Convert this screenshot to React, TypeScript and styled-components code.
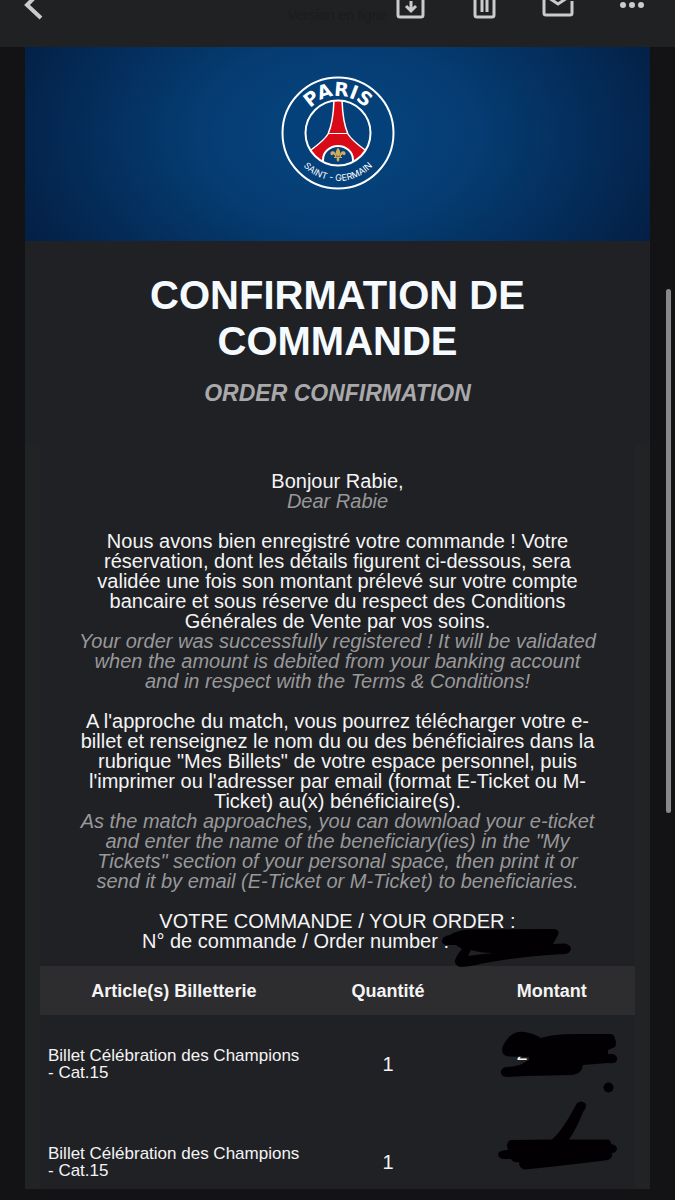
import { ReactNode } from "react";
import styled, { createGlobalStyle } from "styled-components";

const GlobalStyle = createGlobalStyle`
  * {
    box-sizing: border-box;
  }
  body {
    margin: 0;
    background: #131315;
    color: #f4f4f5;
    font-family: "Liberation Sans", Arial, sans-serif;
  }
`;

const Screen = styled.div`
  display: flex;
  flex-direction: column;
  height: 100vh;
  padding-bottom: 11px;
  overflow: hidden;
`;

const Toolbar = styled.header`
  position: relative;
  display: flex;
  justify-content: space-between;
  align-items: flex-start;
  flex-shrink: 0;
  height: 47px;
  padding: 0 27px 0 20px;
  background: #1f2122;
`;

const Actions = styled.div`
  display: flex;
  gap: 42px;
`;

const IconButton = styled.button`
  display: flex;
  padding: 0;
  border: 0;
  background: none;
  color: #cbcbcd;
  cursor: pointer;
`;

const OnlineLink = styled.a`
  position: absolute;
  top: 8px;
  left: 0;
  right: 0;
  width: max-content;
  margin: 0 auto;
  font-size: 14px;
  line-height: 15px;
  color: #1b1c1e;
  text-decoration: none;
`;

const Viewport = styled.main`
  position: relative;
  flex: 1;
  min-height: 0;
  padding: 0 25px;
  overflow: hidden;
`;

const ScrollThumb = styled.div`
  position: absolute;
  top: 242px;
  right: 4px;
  width: 5px;
  height: 524px;
  border-radius: 3px;
  background: #89898b;
`;

const Mail = styled.article`
  background: #222325;
  text-align: center;
`;

const Banner = styled.div`
  display: flex;
  justify-content: center;
  padding: 28px 0 50px;
  background: radial-gradient(
    ellipse 56% 120% at 50% 45%,
    #064680 0%,
    #053c72 40%,
    #042b57 75%,
    #041f45 100%
  );
`;

const Heading = styled.div`
  padding: 31px 100px 39px;
  background: #202124;
`;

const Title = styled.h1`
  margin: 0;
  font-size: 40px;
  line-height: 46px;
  color: #f5faff;
`;

const Subtitle = styled.p`
  margin: 16px 0 0;
  font-size: 23px;
  font-weight: bold;
  font-style: italic;
  line-height: 26px;
  color: #a9a9ab;
`;

const Content = styled.div`
  margin: 0 15px;
  padding-top: 26px;
  background: #202124;
`;

const Paragraph = styled.p`
  margin: 0 38px 20px;
  font-size: 20px;
  line-height: 20px;
`;

const English = styled.em`
  display: block;
  color: #98989a;
`;

const OrderInfo = styled(Paragraph)`
  margin-bottom: 15px;
`;

const OrderNumber = styled.span`
  position: relative;
  padding-right: 84px;
`;

const Table = styled.table`
  width: 100%;
  border-collapse: collapse;
  table-layout: fixed;
`;

const HeadCell = styled.th<{ $width: string }>`
  width: ${({ $width }) => $width};
  height: 49px;
  padding: 0;
  background: #2d2d2f;
  font-size: 18px;
  line-height: 20px;
`;

const Cell = styled.td`
  height: 98px;
  padding: 0;
  font-size: 20px;
  line-height: 20px;
`;

const ItemCell = styled(Cell)`
  padding: 0 4px 0 8px;
  font-size: 17px;
  line-height: 17px;
  text-align: left;
`;

const Amount = styled.div`
  position: relative;
  height: 98px;
  padding: 28px 0 0 48px;
  text-align: left;
`;

const Scribble = styled.svg`
  position: absolute;
  overflow: visible;
  fill: #020003;
`;

const OrderScribble = styled(Scribble)`
  top: -2px;
  right: -37px;
`;

const AmountScribble = styled(Scribble)`
  top: 0;
  left: 22px;
`;

function Icon({ children }: { children: ReactNode }) {
  return (
    <svg
      width="32"
      height="22"
      viewBox="0 0 32 22"
      fill="none"
      stroke="currentColor"
      strokeWidth="3"
      aria-hidden="true"
    >
      {children}
    </svg>
  );
}

function Logo() {
  return (
    <svg width="116" height="116" viewBox="0 0 116 116" role="img" aria-label="Paris Saint-Germain">
      <defs>
        <path id="arcTop" d="M21 58a37 37 0 0 1 74 0" />
        <path id="arcBottom" d="M10 58a48 48 0 0 0 96 0" />
        <clipPath id="disc">
          <circle cx="58" cy="58" r="32" />
        </clipPath>
      </defs>
      <circle cx="58" cy="58" r="55.5" fill="#04407a" stroke="#fff" strokeWidth="2" />
      <g clipPath="url(#disc)">
        <path
          d="M54 20C54 38 52 50 48 59C44 66 36 71 27 78L36 96H80L89 78C80 71 72 66 68 59C64 50 62 38 62 20z"
          fill="#d90a18"
          stroke="#fff"
          strokeWidth="1.5"
        />
        <path d="M48 58.5h20" stroke="#fff" strokeWidth="1" />
        <path d="M43 94V85a15 14 0 0 1 30 0v9z" fill="#04407a" stroke="#fff" strokeWidth="2" />
      </g>
      <circle cx="58" cy="58" r="32.5" fill="none" stroke="#fff" strokeWidth="2" />
      <g fill="#d3a95a" stroke="none">
        <path d="M58 72.5c3 4 2.500 6 1 9h-2c-1.500-3-2-5 1-9z" />
        <path d="M56.500 82c0-5-3-6.500-5-5.500s-1 4.500 1 3.500c1.500-1 2.500 0 2.500 2zM59.500 82c0-5 3-6.500 5-5.500s1 4.500-1 3.500c-1.500-1-2.500 0-2.500 2z" />
        <path d="M54 82h8v1h-8zM57 83h2l.5 2-1.500 2-1.500-2z" />
      </g>
      <text
        fill="#fff"
        fontFamily="'DejaVu Sans', sans-serif"
        fontWeight="bold"
        fontSize="19"
        textAnchor="middle"
      >
        <textPath href="#arcTop" startOffset="50%">
          PARIS
        </textPath>
      </text>
      <text fill="#fff" fontFamily="Inter, sans-serif" fontSize="9" textAnchor="middle">
        <textPath href="#arcBottom" startOffset="50%">
          SAINT - GERMAIN
        </textPath>
      </text>
    </svg>
  );
}

const App = () => {
  return (
    <>
      <GlobalStyle />
      <Screen>
        <Toolbar>
          <IconButton aria-label="Retour">
            <Icon>
              <path d="M20-8L7 5l14 13" strokeWidth="4" />
            </Icon>
          </IconButton>
          <OnlineLink href="#">Version en ligne</OnlineLink>
          <Actions>
            <IconButton aria-label="Archiver">
              <Icon>
                <path d="M4-6v21a2 2 0 0 0 2 2h21a2 2 0 0 0 2-2V-6" />
                <path d="M17 1v10M12 6l5 5 5-5" />
              </Icon>
            </IconButton>
            <IconButton aria-label="Supprimer">
              <Icon>
                <path d="M7-4v19a2 2 0 0 0 2 2h15a2 2 0 0 0 2-2V-4M14 0v12M19 0v12" />
              </Icon>
            </IconButton>
            <IconButton aria-label="Marquer comme non lu">
              <Icon>
                <path d="M2-6v19a2 2 0 0 0 2 2h24a2 2 0 0 0 2-2V1M7-2l9 6 9-6" />
              </Icon>
            </IconButton>
            <IconButton aria-label="Plus">
              <Icon>
                <g fill="currentColor" stroke="none">
                  <circle cx="7" cy="5" r="3" />
                  <circle cx="16" cy="5" r="3" />
                  <circle cx="25" cy="5" r="3" />
                </g>
              </Icon>
            </IconButton>
          </Actions>
        </Toolbar>
        <Viewport>
          <Mail>
            <Banner>
              <Logo />
            </Banner>
            <Heading>
              <Title>CONFIRMATION DE COMMANDE</Title>
              <Subtitle>ORDER CONFIRMATION</Subtitle>
            </Heading>
            <Content>
              <Paragraph>
                Bonjour Rabie,
                <English>Dear Rabie</English>
              </Paragraph>
              <Paragraph>
                Nous avons bien enregistré votre commande ! Votre réservation, dont les détails
                figurent ci-dessous, sera validée une fois son montant prélevé sur votre compte
                bancaire et sous réserve du respect des Conditions Générales de Vente par vos
                soins.
                <English>
                  Your order was successfully registered ! It will be validated when the amount is
                  debited from your banking account and in respect with the Terms &amp;
                  Conditions!
                </English>
              </Paragraph>
              <Paragraph>
                A l'approche du match, vous pourrez télécharger votre e-billet et renseignez le
                nom du ou des bénéficiaires dans la rubrique "Mes Billets" de votre espace
                personnel, puis l'imprimer ou l'adresser par email (format E-Ticket ou M-Ticket)
                au(x) bénéficiaire(s).
                <English>
                  As the match approaches, you can download your e-ticket and enter the name of
                  the beneficiary(ies) in the "My Tickets" section of your personal space, then
                  print it or send it by email (E-Ticket or M-Ticket) to beneficiaries.
                </English>
              </Paragraph>
              <OrderInfo>
                VOTRE COMMANDE / YOUR ORDER :
                <br />
                <OrderNumber>
                  N° de commande / Order number :
                  <OrderScribble width="130" height="40" viewBox="440 928 130 40" aria-hidden="true">
                    <path
                      fillRule="evenodd"
                      d="M442 941Q442 936 450 935Q457 930 470 929.500L554 929Q560 930 558 935L553 944L565 943.500Q571 945 571 949Q570 954 564 954Q515 957 485 963Q468 967 460 967Q454 965 455 960Q457 954 462 949L456 945L446 945Q442 944 442 941zM471 950L468 956Q482 954 493 953Q480 953 471 950z"
                    />
                  </OrderScribble>
                </OrderNumber>
              </OrderInfo>
              <Table>
                <thead>
                  <tr>
                    <HeadCell $width="45%">Article(s) Billetterie</HeadCell>
                    <HeadCell $width="27%">Quantité</HeadCell>
                    <HeadCell $width="28%">Montant</HeadCell>
                  </tr>
                </thead>
                <tbody>
                  <tr>
                    <ItemCell>Billet Célébration des Champions - Cat.15</ItemCell>
                    <Cell>1</Cell>
                    <Cell>
                      <Amount>
                        2
                        <AmountScribble width="140" height="98" viewBox="490 1015 140 98" aria-hidden="true">
                          <path d="M502 1050Q502 1045 509 1037Q515 1031 524 1032Q533 1033 541 1038Q553 1034 575 1034L611 1034Q615 1035 615 1039Q617 1043 615 1047L608 1050L608 1054L613 1054Q618 1056 617 1060Q616 1064 608 1063L583 1065Q582 1074 572 1075L525 1076L507 1077Q500 1076 501 1071Q502 1067 508 1067Q521 1066 525 1062L529 1060L529 1057L508 1056.500Q502 1055 502 1050z" />
                          <circle cx="608.5" cy="1087.5" r="5" />
                        </AmountScribble>
                      </Amount>
                    </Cell>
                  </tr>
                  <tr>
                    <ItemCell>Billet Célébration des Champions - Cat.15</ItemCell>
                    <Cell>1</Cell>
                    <Cell>
                      <Amount>
                        <AmountScribble width="140" height="98" viewBox="490 1113 140 98" aria-hidden="true">
                          <path d="M577 1103Q581 1100 585 1103Q588 1106 583 1112Q577 1128 569 1139.500L608 1139.500Q611 1140 611 1144Q617 1145 617 1149Q616 1153 612 1153Q613 1158 608 1160Q570 1165 525 1169.500Q519 1169 519 1162Q513 1163 511 1159L503 1159Q498 1158 498 1154Q499 1150 508 1150Q505 1142 511 1140L552 1139.500Q563 1130 577 1103z" />
                        </AmountScribble>
                      </Amount>
                    </Cell>
                  </tr>
                </tbody>
              </Table>
            </Content>
          </Mail>
          <ScrollThumb />
        </Viewport>
      </Screen>
    </>
  );
};

export default App;
